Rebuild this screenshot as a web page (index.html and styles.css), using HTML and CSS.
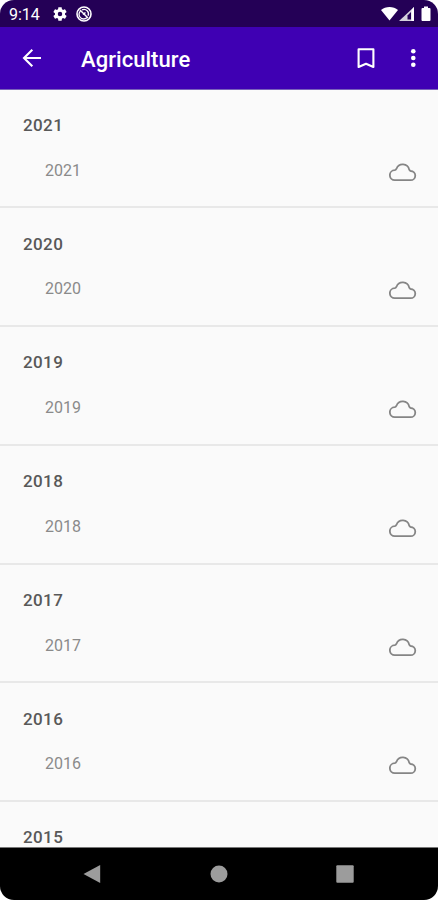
FILE: index.html
```html
<!DOCTYPE html>
<html lang="en">
<head>
<meta charset="utf-8">
<title>Agriculture</title>
<link rel="stylesheet" href="styles.css">
</head>
<body>
<svg class="defs" aria-hidden="true">
  <symbol id="cloud" viewBox="0 0 28 20">
    <path d="M6 18.200H21.600A4.600 4.600 0 0 0 21.700 9C21 8.900 20.600 8.500 20.200 7.600A6.650 6.650 0 0 0 7.500 6.700C7 7.700 6.600 8.100 5.700 8.200A5 5 0 0 0 6 18.200Z" fill="none" stroke="#858585" stroke-width="1.800"/>
  </symbol>
</svg>
<div class="screen">
  <div class="status">
    <span class="clock">9:14</span>
    <svg class="gear" viewBox="2 2 20 20"><path fill="#fff" d="M19.14 12.94c.04-.3.06-.61.06-.94 0-.32-.02-.64-.07-.94l2.03-1.58c.18-.14.23-.41.12-.61l-1.92-3.32c-.12-.22-.37-.29-.59-.22l-2.39.96c-.5-.38-1.03-.7-1.62-.94l-.36-2.54c-.04-.24-.24-.41-.48-.41h-3.84c-.24 0-.43.17-.47.41l-.36 2.54c-.59.24-1.13.57-1.62.94l-2.39-.96c-.22-.08-.47 0-.59.22L2.74 8.87c-.12.21-.08.47.12.61l2.03 1.58c-.05.3-.09.63-.09.94s.02.64.07.94l-2.03 1.58c-.18.14-.23.41-.12.61l1.92 3.32c.12.22.37.29.59.22l2.39-.96c.5.38 1.03.7 1.62.94l.36 2.54c.05.24.24.41.48.41h3.84c.24 0 .44-.17.47-.41l.36-2.54c.59-.24 1.13-.56 1.62-.94l2.39.96c.22.08.47 0 .59-.22l1.92-3.32c.12-.22.07-.47-.12-.61l-2.01-1.58zM12 15.2A3.2 3.2 0 1 1 12 8.8a3.2 3.2 0 0 1 0 6.400z"/></svg>
    <svg class="ring" viewBox="0 0 16 16" fill="none" stroke="#fff"><circle cx="8" cy="8" r="7" stroke-width="1.600"/><path d="M4.500 5A4.600 4.600 0 1 0 11 11.500M6 3.900A4.500 4.500 0 0 1 12.100 9.800" stroke-width="1.300"/><path d="M4 4L12 12M7 8.500L9.500 6.500" stroke-width="1.500"/></svg>
    <svg class="signals" viewBox="0 0 50 16">
      <path fill="#fff" d="M0 4C4.500 0 12.500 0 17 4L8.500 14.500Z"/>
      <path fill="#d5d1dc" d="M18 15L33 1V15Z"/><path fill="#240056" d="M26.500 9.500L30 6V13.500H26.500Z"/><path fill="#fff" d="M30.500 4L33 1V15H30.500Z"/>
      <path fill="#fff" d="M43 .5H47V2H48.500Q49.500 2 49.500 3V14Q49.500 15 48.500 15H41.500Q40.500 15 40.500 14V3Q40.500 2 41.500 2H43Z"/>
    </svg>
  </div>
  <header class="bar">
    <svg class="back" viewBox="0 0 20 20" fill="none" stroke="#fff" stroke-width="2.100"><path d="M19 10H2.500M10.300 1.700L2 10L10.300 18.300"/></svg>
    <h1>Agriculture</h1>
    <svg class="bookmark" viewBox="0 0 18 22" fill="none" stroke="#fff" stroke-width="2.100"><path d="M1.600 2.200H16.400V20L9 16.800L1.600 20Z" stroke-linejoin="round"/></svg>
    <svg class="more" viewBox="0 0 6 20" fill="#fff"><circle cx="3.300" cy="3.300" r="2.300"/><circle cx="3.300" cy="10" r="2.300"/><circle cx="3.300" cy="16.700" r="2.300"/></svg>
  </header>
  <main class="list">
    <section class="row"><h2>2021</h2><div class="item"><span>2021</span><svg class="cloud"><use href="#cloud"/></svg></div></section>
    <section class="row"><h2>2020</h2><div class="item"><span>2020</span><svg class="cloud"><use href="#cloud"/></svg></div></section>
    <section class="row"><h2>2019</h2><div class="item"><span>2019</span><svg class="cloud"><use href="#cloud"/></svg></div></section>
    <section class="row"><h2>2018</h2><div class="item"><span>2018</span><svg class="cloud"><use href="#cloud"/></svg></div></section>
    <section class="row"><h2>2017</h2><div class="item"><span>2017</span><svg class="cloud"><use href="#cloud"/></svg></div></section>
    <section class="row"><h2>2016</h2><div class="item"><span>2016</span><svg class="cloud"><use href="#cloud"/></svg></div></section>
    <section class="row"><h2>2015</h2></section>
  </main>
  <nav class="nav">
    <svg viewBox="0 0 20 20"><path d="M1.500 10L18.200 1V19Z" fill="#9c9c9c"/></svg>
    <svg viewBox="0 0 20 20"><circle cx="10" cy="10" r="8.500" fill="#9c9c9c"/></svg>
    <svg viewBox="0 0 20 20"><rect x="1.300" y="1.300" width="17.400" height="17.400" rx="1" fill="#9c9c9c"/></svg>
  </nav>
</div>
</body>
</html>
```
FILE: styles.css
```css
* { box-sizing: border-box; }
body { margin: 0; background: #fff; font-family: Roboto, sans-serif; }
h1, h2 { margin: 0; font-weight: 500; }
svg { display: block; flex: none; }
.defs { display: none; }
.screen { width: 438px; height: 900px; display: flex; flex-direction: column; border-radius: 14px; overflow: hidden; background: #fafafa; }
.status { height: 27px; flex: none; background: #240056; display: flex; align-items: center; padding: 1px 7px 0 9px; color: #fff; }
.clock { width: 44px; padding-top: 1px; font-size: 16px; line-height: 20px; }
.gear { width: 14px; height: 14px; }
.ring { width: 16px; height: 16px; margin-left: 9px; }
.signals { width: 50px; height: 16px; margin-left: auto; }
.bar { height: 62.500px; flex: none; background: #3f00b3; display: flex; align-items: center; padding: 0 22px; color: #fff; border-bottom: 1px solid #7a62ba; }
.back { width: 20px; height: 20px; }
.bar h1 { flex: 1; margin-left: 39px; font-size: 22px; line-height: 28px; letter-spacing: .05px; padding-top: 4px; }
.bookmark { width: 18px; height: 22px; margin-right: 35px; }
.more { width: 6px; height: 20px; }
.list { flex: 1; min-height: 0; overflow: hidden; }
.row { height: 118.750px; border-bottom: 2px solid #e8e8e8; padding: 23.250px 21px 0 23px; }
.row h2 { font-size: 17px; line-height: 24px; letter-spacing: .4px; color: #585858; }
.item { display: flex; align-items: center; justify-content: space-between; height: 24px; margin-top: 21.800px; padding-left: 22px; }
.item span { font-size: 16px; line-height: 24px; color: #8a8a8a; }
.cloud { width: 28px; height: 20px; margin-top: 2px; }
.nav { height: 53px; flex: none; background: #000; border-top: 1px solid #777; display: flex; align-items: center; justify-content: space-between; padding: 0 83px 0 82px; }
.nav svg { width: 20px; height: 20px; }
```
